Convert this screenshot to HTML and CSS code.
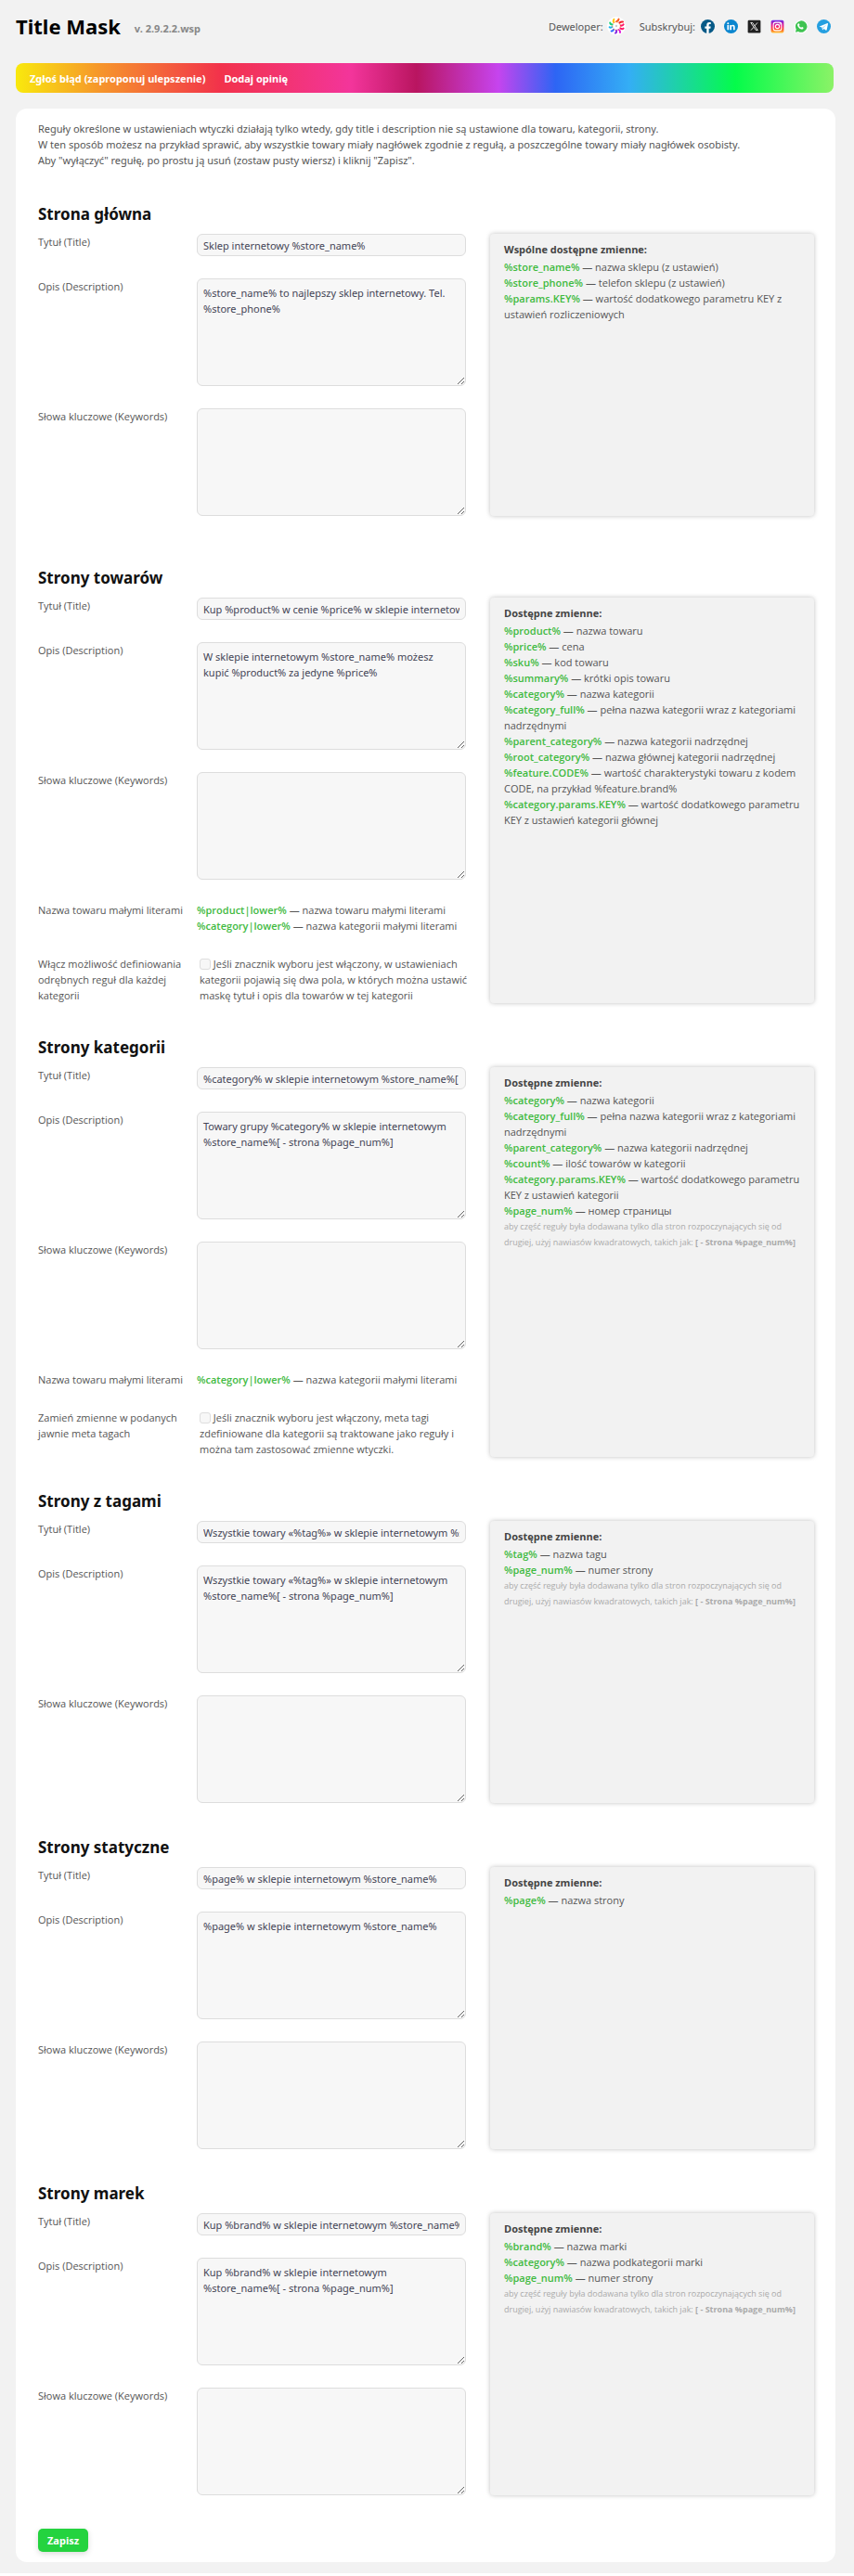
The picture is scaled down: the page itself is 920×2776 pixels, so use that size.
FILE: index.html
```html
<!DOCTYPE html>
<html lang="pl">
<head>
  <meta charset="UTF-8">
  <meta name="viewport" content="width=device-width, initial-scale=1.0">
  <title>Title Mask</title>
  <link rel="stylesheet" href="styles.css">
</head>
<body>
<div class="page">

  <header class="header">
    <h1>Title Mask</h1>
    <span class="version">v. 2.9.2.2.wsp</span>

    <div class="developer">
      <span>Deweloper:</span>
      <a href="#" class="dev-logo" aria-label="Deweloper">
        <svg viewBox="0 0 20 20" width="20" height="20">
          <g fill="none" stroke-width="2" stroke-linecap="round">
            <path stroke="#ff5a1f" d="M10 5.2Q12 5 12.6 2.6"/>
            <path stroke="#f5222d" d="M13.4 6.6Q15 5.2 17 5.6"/>
            <path stroke="#ff1464" d="M14.8 9.6Q17 9.8 17.6 8.4M14.4 12.6Q16.4 13.8 17.6 12.6"/>
            <path stroke="#e016d8" d="M12.6 14Q14.4 15 14 17"/>
            <path stroke="#8a2be2" d="M10 14.8Q10.6 17 9 17.6"/>
            <path stroke="#2f6bff" d="M7 13.8Q6.4 15.8 4.6 15.4"/>
            <path stroke="#18b4f0" d="M5.4 11Q3.6 12.4 2.6 11.2"/>
            <path stroke="#1fd07a" d="M5.6 8.4Q3.4 8.4 3.2 6.4"/>
            <path stroke="#ffc400" d="M7.4 6Q6.2 4.6 7.4 2.8"/>
          </g>
          <circle cx="10" cy="10" r="4.4" fill="none" stroke="#f08a5a" stroke-width="1" stroke-dasharray="2 2"/>
          <circle cx="10" cy="10" r="1.2" fill="#ccc"/>
        </svg>
      </a>
    </div>

    <nav class="social">
      <span>Subskrybuj:</span>
      <a href="#" aria-label="Facebook">
        <svg viewBox="0 0 24 24" width="15" height="15">
          <circle cx="12" cy="12" r="12" fill="#075a87"/>
          <path fill="#fff" d="M10 24v-8.600H7V12h3V9.400C10 6.300 11.800 4.600 14.600 4.600c1.300 0 2.600.2 2.600.2v3h-1.500c-1.500 0-1.900.9-1.900 1.800V12h3.300l-.5 3.400h-2.800V24z"/>
        </svg>
      </a>
      <a href="#" aria-label="LinkedIn">
        <svg viewBox="0 0 24 24" width="15" height="15">
          <circle cx="12" cy="12" r="12" fill="#0a86cf"/>
          <path fill="#fff" d="M5.500 9.500h2.700V18H5.500zM6.850 5.300a1.600 1.600 0 1 1 0 3.200 1.600 1.600 0 0 1 0-3.200zM10 9.500h2.600v1.200c.5-.9 1.500-1.500 2.800-1.500 2.700 0 3.300 1.800 3.300 4.100V18H16v-4.200c0-1.100-.1-2.200-1.500-2.200s-1.700 1-1.700 2.200V18H10z"/>
        </svg>
      </a>
      <a href="#" aria-label="X">
        <svg viewBox="0 0 24 24" width="15" height="15">
          <rect x="1" y="1" width="22" height="22" rx="2" fill="#222"/>
          <path fill="none" stroke="#fff" stroke-width="1.400" d="M6 5.500h3l9 13h-3zM17.500 5.500l-4.600 5.400M11 13.300l-4.600 5.200"/>
        </svg>
      </a>
      <a href="#" aria-label="Instagram">
        <svg viewBox="0 0 24 24" width="15" height="15">
          <defs>
            <linearGradient id="ig" x1="0" y1="0" x2="0" y2="1">
              <stop offset="0" stop-color="#6a2cf0"/>
              <stop offset=".45" stop-color="#f01880"/>
              <stop offset=".75" stop-color="#ff5a2a"/>
              <stop offset="1" stop-color="#ffc93c"/>
            </linearGradient>
          </defs>
          <rect x="1" y="1" width="22" height="22" rx="3" fill="url(#ig)"/>
          <rect x="5" y="5" width="14" height="14" rx="4" fill="none" stroke="#fff" stroke-width="1.800"/>
          <circle cx="12" cy="12" r="3.400" fill="none" stroke="#fff" stroke-width="1.800"/>
          <circle cx="16.200" cy="7.800" r="1" fill="#fff"/>
        </svg>
      </a>
      <a href="#" aria-label="WhatsApp">
        <svg viewBox="0 0 24 24" width="15" height="15">
          <path fill="#fff" d="M1 24l1.800-6.200A11.600 11.600 0 1 1 7 22.300z"/>
          <path fill="#3fc351" d="M3 22l1.400-5A10 10 0 1 1 8 20.700z"/>
          <path fill="#fff" d="M8.700 6.800c.4 0 .6 0 .8.500l.8 1.900c.1.300 0 .6-.9 1.600.8 1.500 2 2.600 3.700 3.300.9-1.200 1.100-1.400 1.500-1.200l2 1c.4.200.4.400.3.900-.3 1.200-1.500 2-2.600 2-3.600-.2-7.500-3.800-7.800-7.300 0-1.200.9-2.700 2.200-2.700z"/>
        </svg>
      </a>
      <a href="#" aria-label="Telegram">
        <svg viewBox="0 0 24 24" width="15" height="15">
          <circle cx="12" cy="12" r="12" fill="#259fe0"/>
          <path fill="#fff" d="M4.500 11.800L18.200 6.300c.7-.2 1.200.2 1 1.100L17 18c-.2.800-.7.900-1.300.6l-3.500-2.600-1.700 1.700c-.5.500-.9.300-1-.3L8.600 13.600l-4-1.200c-.5-.1-.5-.4-.1-.6z"/>
          <path fill="#9fd3f2" d="M9.800 13.600l7-5-5.400 5.800-1 2.600z"/>
        </svg>
      </a>
    </nav>
  </header>

  <nav class="rainbow">
    <a href="#">Zgłoś błąd (zaproponuj ulepszenie)</a>
    <a href="#">Dodaj opinię</a>
  </nav>

  <form class="card">
    <div class="intro">
      Reguły określone w ustawieniach wtyczki działają tylko wtedy, gdy title i description nie są ustawione dla towaru, kategorii, strony.<br>
      W ten sposób możesz na przykład sprawić, aby wszystkie towary miały nagłówek zgodnie z regułą, a poszczególne towary miały nagłówek osobisty.<br>
      Aby "wyłączyć" regułę, po prostu ją usuń (zostaw pusty wiersz) i kliknij "Zapisz".
    </div>

    <!-- Strona główna -->
    <section class="section section-main">
      <h2>Strona główna</h2>
      <div class="columns">
        <div class="fields">
          <label for="main_title">Tytuł (Title)</label>
          <input type="text" id="main_title" value="Sklep internetowy %store_name%">
          <label for="main_desc">Opis (Description)</label>
          <textarea id="main_desc">%store_name% to najlepszy sklep internetowy. Tel. %store_phone%</textarea>
          <label for="main_keys">Słowa kluczowe (Keywords)</label>
          <textarea id="main_keys"></textarea>
        </div>
        <aside class="vars">
          <h3>Wspólne dostępne zmienne:</h3>
          <ul>
            <li><b>%store_name%</b> — nazwa sklepu (z ustawień)</li>
            <li><b>%store_phone%</b> — telefon sklepu (z ustawień)</li>
            <li><b>%params.KEY%</b> — wartość dodatkowego parametru KEY z ustawień rozliczeniowych</li>
          </ul>
        </aside>
      </div>
    </section>

    <!-- Strony towarów -->
    <section class="section">
      <h2>Strony towarów</h2>
      <div class="columns">
        <div class="fields">
          <label for="product_title">Tytuł (Title)</label>
          <input type="text" id="product_title" value="Kup %product% w cenie %price% w sklepie internetowym %store_name%">
          <label for="product_desc">Opis (Description)</label>
          <textarea id="product_desc">W sklepie internetowym %store_name% możesz kupić %product% za jedyne %price%</textarea>
          <label for="product_keys">Słowa kluczowe (Keywords)</label>
          <textarea id="product_keys"></textarea>
          <div>Nazwa towaru małymi literami</div>
          <div>
            <b>%product|lower%</b> — nazwa towaru małymi literami<br>
            <b>%category|lower%</b> — nazwa kategorii małymi literami
          </div>
          <div>Włącz możliwość definiowania odrębnych reguł dla każdej kategorii</div>
          <label class="check"><input type="checkbox"> Jeśli znacznik wyboru jest włączony, w ustawieniach kategorii pojawią się dwa pola, w których można ustawić maskę tytuł i opis dla towarów w tej kategorii</label>
        </div>
        <aside class="vars">
          <h3>Dostępne zmienne:</h3>
          <ul>
            <li><b>%product%</b> — nazwa towaru</li>
            <li><b>%price%</b> — cena</li>
            <li><b>%sku%</b> — kod towaru</li>
            <li><b>%summary%</b> — krótki opis towaru</li>
            <li><b>%category%</b> — nazwa kategorii</li>
            <li><b>%category_full%</b> — pełna nazwa kategorii wraz z kategoriami nadrzędnymi</li>
            <li><b>%parent_category%</b> — nazwa kategorii nadrzędnej</li>
            <li><b>%root_category%</b> — nazwa głównej kategorii nadrzędnej</li>
            <li><b>%feature.CODE%</b> — wartość charakterystyki towaru z kodem CODE, na przykład %feature.brand%</li>
            <li><b>%category.params.KEY%</b> — wartość dodatkowego parametru KEY z ustawień kategorii głównej</li>
          </ul>
        </aside>
      </div>
    </section>

    <!-- Strony kategorii -->
    <section class="section">
      <h2>Strony kategorii</h2>
      <div class="columns">
        <div class="fields">
          <label for="category_title">Tytuł (Title)</label>
          <input type="text" id="category_title" value="%category% w sklepie internetowym %store_name%[ - strona %page_num%]">
          <label for="category_desc">Opis (Description)</label>
          <textarea id="category_desc">Towary grupy %category% w sklepie internetowym %store_name%[ - strona %page_num%]</textarea>
          <label for="category_keys">Słowa kluczowe (Keywords)</label>
          <textarea id="category_keys"></textarea>
          <div>Nazwa towaru małymi literami</div>
          <div><b>%category|lower%</b> — nazwa kategorii małymi literami</div>
          <div>Zamień zmienne w podanych jawnie meta tagach</div>
          <label class="check"><input type="checkbox"> Jeśli znacznik wyboru jest włączony, meta tagi zdefiniowane dla kategorii są traktowane jako reguły i można tam zastosować zmienne wtyczki.</label>
        </div>
        <aside class="vars">
          <h3>Dostępne zmienne:</h3>
          <ul>
            <li><b>%category%</b> — nazwa kategorii</li>
            <li><b>%category_full%</b> — pełna nazwa kategorii wraz z kategoriami nadrzędnymi</li>
            <li><b>%parent_category%</b> — nazwa kategorii nadrzędnej</li>
            <li><b>%count%</b> — ilość towarów w kategorii</li>
            <li><b>%category.params.KEY%</b> — wartość dodatkowego parametru KEY z ustawień kategorii</li>
            <li><b>%page_num%</b> — номер страницы</li>
          </ul>
          <p class="hint">aby część reguły była dodawana tylko dla stron rozpoczynających się od drugiej, użyj nawiasów kwadratowych, takich jak: <strong>[ - Strona %page_num%]</strong></p>
        </aside>
      </div>
    </section>

    <!-- Strony z tagami -->
    <section class="section">
      <h2>Strony z tagami</h2>
      <div class="columns">
        <div class="fields">
          <label for="tag_title">Tytuł (Title)</label>
          <input type="text" id="tag_title" value="Wszystkie towary «%tag%» w sklepie internetowym %store_name%[ - strona %page_num%]">
          <label for="tag_desc">Opis (Description)</label>
          <textarea id="tag_desc">Wszystkie towary «%tag%» w sklepie internetowym %store_name%[ - strona %page_num%]</textarea>
          <label for="tag_keys">Słowa kluczowe (Keywords)</label>
          <textarea id="tag_keys"></textarea>
        </div>
        <aside class="vars">
          <h3>Dostępne zmienne:</h3>
          <ul>
            <li><b>%tag%</b> — nazwa tagu</li>
            <li><b>%page_num%</b> — numer strony</li>
          </ul>
          <p class="hint">aby część reguły była dodawana tylko dla stron rozpoczynających się od drugiej, użyj nawiasów kwadratowych, takich jak: <strong>[ - Strona %page_num%]</strong></p>
        </aside>
      </div>
    </section>

    <!-- Strony statyczne -->
    <section class="section">
      <h2>Strony statyczne</h2>
      <div class="columns">
        <div class="fields">
          <label for="page_title">Tytuł (Title)</label>
          <input type="text" id="page_title" value="%page% w sklepie internetowym %store_name%">
          <label for="page_desc">Opis (Description)</label>
          <textarea id="page_desc">%page% w sklepie internetowym %store_name%</textarea>
          <label for="page_keys">Słowa kluczowe (Keywords)</label>
          <textarea id="page_keys"></textarea>
        </div>
        <aside class="vars">
          <h3>Dostępne zmienne:</h3>
          <ul>
            <li><b>%page%</b> — nazwa strony</li>
          </ul>
        </aside>
      </div>
    </section>

    <!-- Strony marek -->
    <section class="section">
      <h2>Strony marek</h2>
      <div class="columns">
        <div class="fields">
          <label for="brand_title">Tytuł (Title)</label>
          <input type="text" id="brand_title" value="Kup %brand% w sklepie internetowym %store_name%[ - strona %page_num%]">
          <label for="brand_desc">Opis (Description)</label>
          <textarea id="brand_desc">Kup %brand% w sklepie internetowym %store_name%[ - strona %page_num%]</textarea>
          <label for="brand_keys">Słowa kluczowe (Keywords)</label>
          <textarea id="brand_keys"></textarea>
        </div>
        <aside class="vars">
          <h3>Dostępne zmienne:</h3>
          <ul>
            <li><b>%brand%</b> — nazwa marki</li>
            <li><b>%category%</b> — nazwa podkategorii marki</li>
            <li><b>%page_num%</b> — numer strony</li>
          </ul>
          <p class="hint">aby część reguły była dodawana tylko dla stron rozpoczynających się od drugiej, użyj nawiasów kwadratowych, takich jak: <strong>[ - Strona %page_num%]</strong></p>
        </aside>
      </div>
    </section>

    <button type="submit" class="save">Zapisz</button>
  </form>

</div>
</body>
</html>
```

FILE: styles.css
```css
* {
  box-sizing: border-box;
}

body {
  margin: 0;
  background: #fff;
  color: #555;
  font-family: "Noto Sans", "Open Sans", sans-serif;
  font-size: 11px;
  line-height: 17px;
}

.page {
  background: #f2f2f2;
  padding: 16px 20px 12px 17px;
}

/* header */
.header {
  display: flex;
  align-items: center;
  height: 24px;
  padding-right: 5px;
  margin-bottom: 28px;
}

h1 {
  margin: 0 15px 0 0;
  font-size: 22px;
  line-height: 24px;
  color: #000;
}

.version {
  padding-top: 4px;
  font-weight: bold;
  color: #888;
}

.developer {
  display: flex;
  align-items: center;
  gap: 4px;
  margin-left: auto;
  margin-right: 15px;
}

.dev-logo {
  display: flex;
  background: #fff;
  border-radius: 50%;
}

.social {
  display: flex;
  align-items: center;
  gap: 10px;
}

.social span {
  margin-right: -4px;
}

.social a {
  display: flex;
}

/* rainbow bar */
.rainbow {
  display: flex;
  align-items: center;
  gap: 20px;
  height: 32px;
  margin: 0 2px 17px 0;
  padding: 0 15px;
  border-radius: 8px;
  background: linear-gradient(90deg, #f9e90d 0%, #f6982a 10%, #f2324b 25%, #f3359b 41%, #b91560 49%, #c644ee 59%, #2d65f4 66%, #34aef5 75%, #04fc4a 88%, #8bf267 100%);
}

.rainbow a {
  color: #fff;
  font-weight: bold;
  text-decoration: none;
}

/* card */
.card {
  padding: 13px 23px 11px 24px;
  background: #fff;
  border-radius: 12px;
}

.intro {
  margin-bottom: 38px;
}

.section {
  margin-bottom: 36px;
}

.section-main {
  margin-bottom: 55px;
}

h2 {
  margin: 0 0 9px;
  font-size: 17px;
  line-height: 24px;
  color: #111;
}

.columns {
  display: grid;
  grid-template-columns: 461fr 349fr;
  gap: 26px;
  font-family: "Open Sans", "Noto Sans", sans-serif;
}

.fields {
  display: grid;
  grid-template-columns: 171px 1fr;
  row-gap: 24px;
  align-content: start;
}

.fields > :nth-child(odd) {
  padding-right: 12px;
}

.fields input[type="text"],
.fields textarea {
  display: block;
  width: 100%;
  margin: 0;
  padding: 6px;
  border: 1px solid #ddd;
  border-radius: 6px;
  background: #f7f7f7;
  color: #445;
  font: inherit;
  font-family: "Noto Sans", "Open Sans", sans-serif;
}

.fields input[type="text"] {
  height: 24px;
  padding: 0 6px;
}

.fields textarea {
  height: 116px;
  resize: vertical;
}

.fields b,
.vars b {
  font-weight: 600;
  color: #3fba3f;
}

.check {
  margin-right: -8px;
  padding-left: 3px;
}

.check input {
  appearance: none;
  width: 12px;
  height: 12px;
  margin: 0;
  border: 1px solid #ddd;
  border-radius: 3px;
  background: #f7f7f7;
  vertical-align: -2px;
}

.check input:checked {
  background: #3fba3f;
}

/* available variables */
.vars {
  padding: 8px 8px 8px 15px;
  background: #f2f2f2;
  border-radius: 4px;
  box-shadow: 0 0 5px rgba(0, 0, 0, 0.25);
}

.vars h3 {
  margin: 0 0 2px;
  font-size: 11px;
  line-height: 17px;
  color: #444;
}

.vars ul {
  margin: 0;
  padding: 0;
  list-style: none;
}

.hint {
  margin: 0;
  font-size: 9px;
  color: #aaa;
}

.save {
  display: block;
  height: 25px;
  padding: 0 10px;
  border: 0;
  border-radius: 5px;
  background: #24d33f;
  box-shadow: 0 2px 6px rgba(0, 0, 0, 0.15);
  color: #fff;
  font: inherit;
  font-weight: bold;
}
```
